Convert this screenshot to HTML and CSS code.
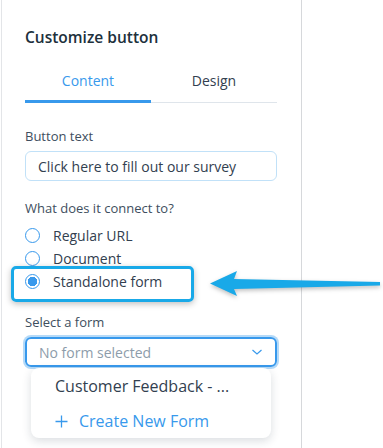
FILE: index.html
```html
<!DOCTYPE html>
<html lang="en">
	<head>
		<title>Customize button</title>
		<meta charset="utf-8">
		<link rel="stylesheet" href="styles.css">
	</head>
	<body>
		<div id="view">
			<div id="panel">
				<h1>Customize button</h1>
				<div class="tabs">
					<div class="tab active">Content</div>
					<div class="tab">Design</div>
				</div>
				<div class="field text">
					<label for="btn-text">Button text</label>
					<input id="btn-text" type="text" value="Click here to fill out our survey">
				</div>
				<div class="field link">
					<div class="label">What does it connect to?</div>
					<div class="radios">
						<div class="radio"><span class="dot"></span>Regular URL</div>
						<div class="radio"><span class="dot"></span>Document</div>
						<div class="radio checked"><span class="dot"></span>Standalone form</div>
					</div>
				</div>
				<div class="field form">
					<div class="label">Select a form</div>
					<div class="select">
						<span>No form selected</span>
						<svg width="12" height="8" viewBox="0 0 12 8"><path d="M1.5 2 L6 6 L10.5 2" fill="none" stroke="#3899ec" stroke-width="1.2"/></svg>
					</div>
					<div class="menu">
						<div class="item">Customer Feedback - ...</div>
						<div class="item create">
							<svg class="plus" width="13" height="13" viewBox="0 0 13 13"><path d="M6.5 0.5 V12.5 M0.5 6.5 H12.5" stroke="#3899ec" stroke-width="1.3"/></svg>
							Create New Form
						</div>
					</div>
				</div>
			</div>
			<div id="stage"></div>
			<div class="callout"></div>
			<svg class="arrow" width="383" height="448" viewBox="0 0 383 448">
				<polygon points="210,283.5 237,271 234,279 380,282 380,285.5 234,289 237,296" fill="#19a9e8"/>
			</svg>
		</div>
	</body>
</html>
```

FILE: styles.css
```css
html, body {
	margin: 0;
	height: 100%;
	background-color: #FFFFFF;
}
body {
	font-family: 'Open Sans', sans-serif;
	color: #32404F;
	overflow: hidden;
}
#view {
	position: relative;
	display: flex;
	width: 383px;
	height: 448px;
}
#panel {
	flex: 0 0 auto;
	width: 252px;
	margin-left: 1px;
	padding: 0 24px 0 23px;
	border-left: 1px solid #E3E5E8;
	border-right: 1px solid #D6D8DB;
}
#stage {
	flex: 1 1 auto;
}
h1 {
	margin: 27px 0 0;
	font-size: 15.5px;
	font-weight: 600;
	line-height: 20px;
	color: #20303C;
}
.tabs {
	display: flex;
	margin-top: 24px;
	border-bottom: 1px solid #DFE5EB;
}
.tab {
	flex: 1 1 0;
	text-align: center;
	font-size: 14px;
	line-height: 20px;
	padding-bottom: 11px;
	color: #32404F;
}
.tab.active {
	color: #3899EC;
	box-shadow: inset 0 -3px 0 #3899EC;
	margin-bottom: -1px;
	padding-bottom: 12px;
}
.field.text {
	margin-top: 24px;
}
.field.link {
	margin-top: 18px;
}
.field.form {
	margin-top: 20px;
}
.field label, .field .label {
	display: block;
	font-size: 13px;
	line-height: 18px;
	color: #3E4E5E;
}
input {
	box-sizing: border-box;
	display: block;
	width: 252px;
	height: 30px;
	margin-top: 6px;
	padding: 0 12px;
	border: 1px solid #C1E1F8;
	border-radius: 6px;
	font-family: inherit;
	font-size: 14px;
	color: #32404F;
	outline: none;
}
.radios {
	margin-top: 7px;
}
.radio {
	display: flex;
	align-items: center;
	height: 23px;
	font-size: 14px;
	color: #32404F;
}
.radio .dot {
	box-sizing: border-box;
	width: 15px;
	height: 15px;
	margin-right: 13px;
	border: 1px solid #3899EC;
	border-radius: 50%;
}
.radio.checked .dot {
	background: radial-gradient(circle, #3899EC 0 4.5px, #FFFFFF 5px);
}
.select {
	box-sizing: border-box;
	display: flex;
	align-items: center;
	justify-content: space-between;
	width: 252px;
	height: 30px;
	margin-top: 6px;
	padding: 0 12px;
	border: 2px solid #3899EC;
	border-radius: 6px;
	box-shadow: 0 0 0 2px #B5DAF8;
	font-size: 14px;
	color: #8D9CAA;
}
.menu {
	margin: 1px 6px 0;
	padding: 4px 0 3px;
	background: #FFFFFF;
	border-radius: 8px;
	box-shadow: 0 3px 10px rgba(22, 45, 61, 0.16);
}
.item {
	display: flex;
	align-items: center;
	height: 28px;
	padding-left: 24px;
	font-size: 16px;
	color: #32404F;
}
.item.create {
	color: #3899EC;
	margin-top: 7px;
}
.plus {
	margin-right: 11px;
}
.callout {
	position: absolute;
	left: 11px;
	top: 266px;
	width: 177px;
	height: 30px;
	border: 3px solid #19A9E8;
	border-radius: 5px;
	box-shadow: 0 2px 6px rgba(0, 0, 0, 0.25);
}
.arrow {
	position: absolute;
	left: 0;
	top: 0;
	filter: drop-shadow(0 2px 2px rgba(0, 0, 0, 0.25));
}
```
